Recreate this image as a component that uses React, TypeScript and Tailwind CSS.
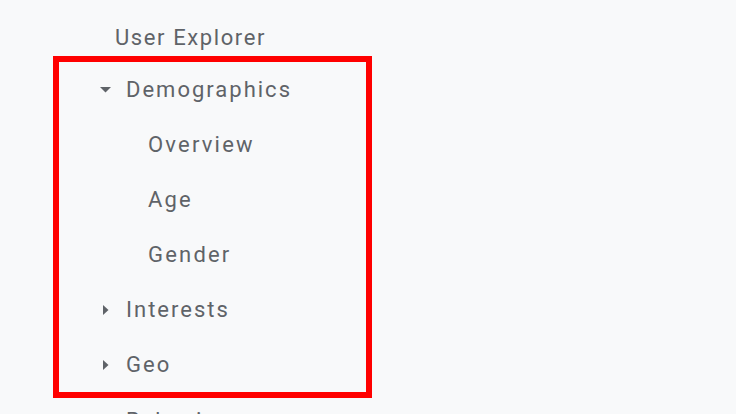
import React from "react";

const font = { fontFamily: "Roboto, 'Noto Sans', sans-serif" };

function DownTri() {
  return (
    <svg width="11" height="6" viewBox="0 0 11 6" className="shrink-0">
      <polygon points="0,0 11,0 5.5,5.5" fill="#5f6368" />
    </svg>
  );
}

function RightTri() {
  return (
    <span className="flex w-[11px] shrink-0 justify-center">
      <svg width="6" height="10" viewBox="0 0 6 10" className="ml-[1px]">
        <polygon points="0,0 5.5,5 0,10" fill="#5f6368" />
      </svg>
    </span>
  );
}

export default function App() {
  return (
    <div
      className="h-[414px] w-[736px] overflow-hidden bg-[#f8f9fa] text-[#5f6368]"
      style={font}
    >
      <div className="pt-[27px] pl-[115px] text-[22px] leading-[21px] tracking-[1.6px]">
        User Explorer
      </div>
      <div className="mt-[8px] ml-[53px] w-[319px] border-[6px] border-[#ff0000]">
        <div className="flex h-[55px] items-center pl-[41px]">
          <DownTri />
          <span className="ml-[15px] text-[22px] tracking-[2px]">Demographics</span>
        </div>
        {["Overview", "Age", "Gender"].map((t) => (
          <div key={t} className="flex h-[55px] items-center pl-[89px] text-[22px] tracking-[2.2px]">
            {t}
          </div>
        ))}
        {["Interests", "Geo"].map((t) => (
          <div key={t} className="flex h-[55px] items-center pl-[41px]">
            <RightTri />
            <span className="ml-[15px] text-[22px] tracking-[2px]">{t}</span>
          </div>
        ))}
      </div>
      <div className="flex h-[44px] items-center pl-[100px]">
        <RightTri />
        <span className="ml-[15px] text-[22px] tracking-[2px]">Behavior</span>
      </div>
    </div>
  );
}
